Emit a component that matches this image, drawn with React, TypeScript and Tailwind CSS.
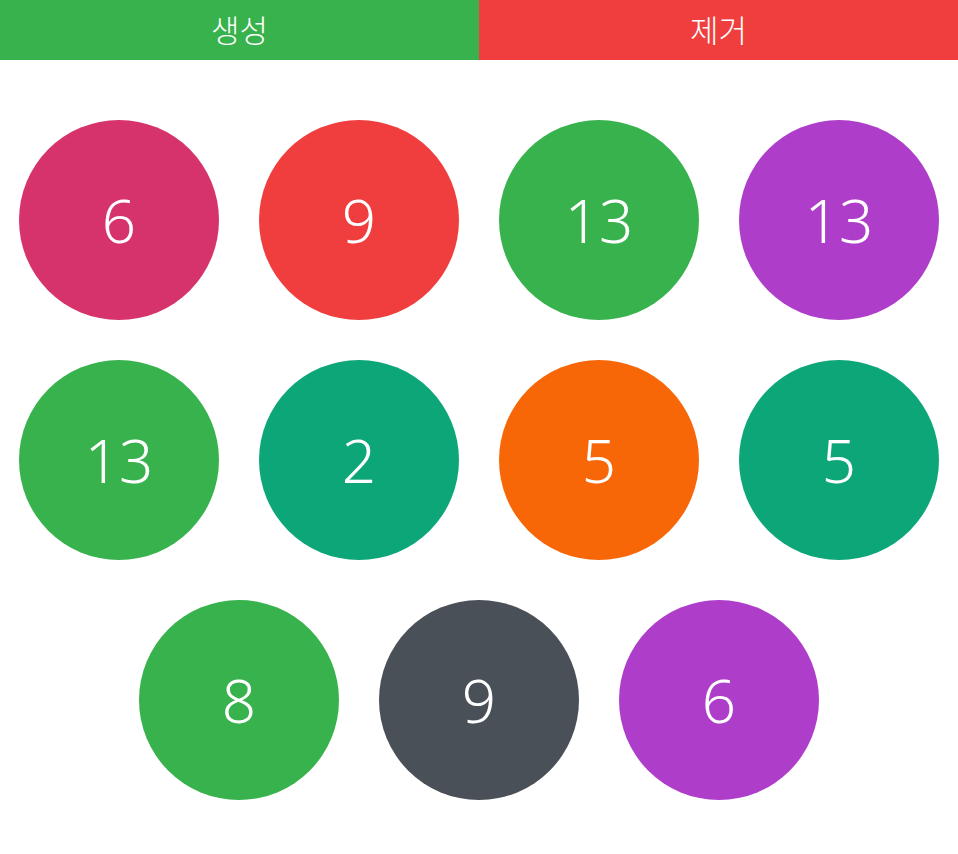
import React from "react";

const rows: { n: number; c: string }[][] = [
  [
    { n: 6, c: "bg-[#d6336c]" },
    { n: 9, c: "bg-[#f03e3e]" },
    { n: 13, c: "bg-[#37b24d]" },
    { n: 13, c: "bg-[#ae3ec9]" },
  ],
  [
    { n: 13, c: "bg-[#37b24d]" },
    { n: 2, c: "bg-[#0ca678]" },
    { n: 5, c: "bg-[#f76707]" },
    { n: 5, c: "bg-[#0ca678]" },
  ],
  [
    { n: 8, c: "bg-[#37b24d]" },
    { n: 9, c: "bg-[#495057]" },
    { n: 6, c: "bg-[#ae3ec9]" },
  ],
];

export default function App() {
  return (
    <div
      className="w-[958px] h-[854px] bg-white overflow-hidden"
      style={{ fontFamily: '"Noto Sans", "Noto Sans CJK KR", sans-serif' }}
    >
      <div className="flex h-[60px]">
        <button className="flex-1 bg-[#37b24d] text-white text-[31px] font-light flex items-center justify-center">
          생성
        </button>
        <button className="flex-1 bg-[#f03e3e] text-white text-[31px] font-light flex items-center justify-center">
          제거
        </button>
      </div>
      <div className="pt-[40px] flex flex-col items-center">
        {rows.map((row, i) => (
          <div key={i} className="flex justify-center w-[960px] shrink-0">
            {row.map((b, j) => (
              <div
                key={j}
                className={`${b.c} m-[20px] w-[200px] h-[200px] rounded-full flex items-center justify-center text-white text-[60px] font-light shrink-0`}
              >
                {b.n}
              </div>
            ))}
          </div>
        ))}
      </div>
    </div>
  );
}
